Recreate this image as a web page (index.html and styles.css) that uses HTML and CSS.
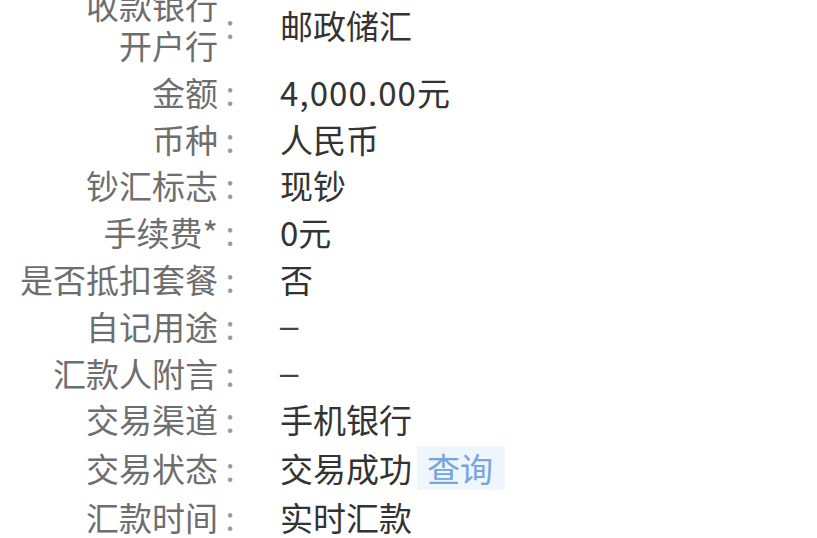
FILE: index.html
```html
<!DOCTYPE html>
<html lang="zh-CN">
<head>
<meta charset="utf-8">
<link rel="stylesheet" href="styles.css">
</head>
<body>
<div class="detail">
  <div class="row"><div class="label">收款银行<br>开户行</div><div class="colon">:</div><div class="value">邮政储汇</div></div>
  <div class="row"><div class="label">金额</div><div class="colon">:</div><div class="value amount">4,000.00元</div></div>
  <div class="row"><div class="label">币种</div><div class="colon">:</div><div class="value">人民币</div></div>
  <div class="row"><div class="label">钞汇标志</div><div class="colon">:</div><div class="value">现钞</div></div>
  <div class="row"><div class="label">手续费*</div><div class="colon">:</div><div class="value">0元</div></div>
  <div class="row"><div class="label">是否抵扣套餐</div><div class="colon">:</div><div class="value">否</div></div>
  <div class="row"><div class="label">自记用途</div><div class="colon">:</div><div class="value dash">–</div></div>
  <div class="row"><div class="label">汇款人附言</div><div class="colon">:</div><div class="value dash">–</div></div>
  <div class="row"><div class="label">交易渠道</div><div class="colon">:</div><div class="value">手机银行</div></div>
  <div class="row"><div class="label">交易状态</div><div class="colon">:</div><div class="value">交易成功<span class="query">查询</span></div></div>
  <div class="row"><div class="label">汇款时间</div><div class="colon">:</div><div class="value">实时汇款</div></div>
</div>
</body>
</html>
```
FILE: styles.css
```css
html, body {
  margin: 0;
  padding: 0;
  background: #ffffff;
  overflow: hidden;
}
body {
  width: 817px;
  height: 538px;
  font-family: "Noto Sans CJK SC", "Noto Sans", sans-serif;
  font-size: 33px;
  line-height: 40px;
}
.detail {
  display: flex;
  flex-direction: column;
  gap: 6.8px;
  margin-top: -15px;
}
.row {
  display: grid;
  grid-template-columns: 218px 24px 1fr;
  align-items: center;
}
.label {
  text-align: right;
  color: #6e6e6e;
}
.colon {
  text-align: center;
  color: #9a9a9a;
}
.value {
  padding-left: 38px;
  color: #333333;
}
.amount {
  letter-spacing: 1.1px;
}
.dash {
  font-family: "Liberation Sans", sans-serif;
  height: 40px;
  color: #444444;
}
.query {
  display: inline-block;
  margin-left: 5px;
  padding: 2px 12px 2px 10px;
  background: #eef5fd;
  color: #76a5dc;
}
```
